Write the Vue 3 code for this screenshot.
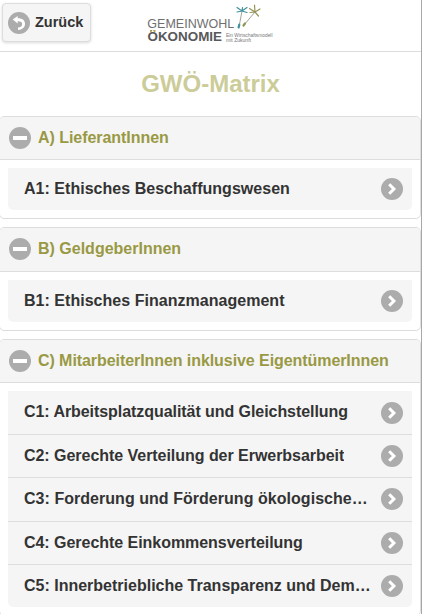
<script setup>
const groups = [
  {
    key: 'a',
    title: 'A) LieferantInnen',
    tracking: -0.05,
    items: [{ text: 'A1: Ethisches Beschaffungswesen', tracking: 0.03 }],
  },
  {
    key: 'b',
    title: 'B) GeldgeberInnen',
    tracking: 0,
    items: [{ text: 'B1: Ethisches Finanzmanagement', tracking: 0.03 }],
  },
  {
    key: 'c',
    title: 'C) MitarbeiterInnen inklusive EigentümerInnen',
    tracking: -0.07,
    items: [
      { text: 'C1: Arbeitsplatzqualität und Gleichstellung', tracking: -0.06 },
      { text: 'C2: Gerechte Verteilung der Erwerbsarbeit', tracking: -0.04 },
      { text: 'C3: Forderung und Förderung ökologischen Verhaltens', tracking: 0.04 },
      { text: 'C4: Gerechte Einkommensverteilung', tracking: -0.04 },
      { text: 'C5: Innerbetriebliche Transparenz und Demokratie', tracking: 0 },
    ],
  },
]
</script>

<template>
  <div class="page">
    <header class="bar">
      <button class="back">
        <svg class="icon" viewBox="0 0 22 22">
          <circle cx="11" cy="11" r="11" fill="#acacac" />
          <path d="M4.700 7.600 9.700 4v2.300c4.600-.1 7.300 2 7.300 5.400 0 3.500-2.700 5.900-7 6.300v-2.400c2.600-.3 4.200-1.700 4.200-3.700 0-1.900-1.500-2.800-4.500-2.700v2.200z" fill="#fff" />
        </svg>
        <span>Zurück</span>
      </button>
      <svg class="logo" viewBox="0 0 128 44">
        <text x="7.300" y="28" font-size="12.800" textLength="87" lengthAdjust="spacingAndGlyphs" fill="#6f6f70">GEMEINWOHL</text>
        <text x="7.500" y="41" font-size="12.800" font-weight="bold" textLength="74.500" lengthAdjust="spacingAndGlyphs" fill="#58585a">ÖKONOMIE</text>
        <g fill="#b5a642"><circle cx="10.800" cy="31" r="1" /><circle cx="14.600" cy="31" r="1" /></g>
        <text x="86" y="36.500" font-size="5.200" textLength="46.500" lengthAdjust="spacingAndGlyphs" fill="#777">Ein Wirtschaftsmodell</text>
        <text x="86" y="42" font-size="5.200" textLength="25" lengthAdjust="spacingAndGlyphs" fill="#777">mit Zukunft</text>
        <g fill="none" stroke-linecap="round">
          <path d="M102 11 99 27M115 12 104 25" stroke="#8b8b7c" stroke-width=".8" />
          <path d="m97 7.500 5 3.500 5-3.500M97 12l5-1 5 1.500M102 11l.5-3.500" stroke="#3f929c" stroke-width="1.200" />
          <path d="m109.500 8.500 5.500 3.500-.5-7M115 12l3.500 4M115 12l-5 .5M115 12l5-3" stroke="#969454" stroke-width="1.200" />
          <path d="m99.300 24.500-.7 3" stroke="#3f929c" stroke-width="2.200" />
          <path d="m105 23.500-1.500 2" stroke="#969454" stroke-width="2.200" />
        </g>
      </svg>
    </header>

    <h1>GWÖ-Matrix</h1>

    <section v-for="g in groups" :key="g.key" class="panel" :class="g.key">
      <h2>
        <svg class="icon" viewBox="0 0 22 22">
          <circle cx="11" cy="11" r="11" fill="#acacac" />
          <path d="M4 9h14v4H4z" fill="#fff" />
        </svg>
        <span :style="{ letterSpacing: g.tracking + 'px' }">{{ g.title }}</span>
      </h2>
      <ul>
        <li v-for="item in g.items" :key="item.text">
          <span class="label" :style="{ letterSpacing: item.tracking + 'px' }">{{ item.text }}</span>
          <svg class="icon" viewBox="0 0 22 22">
            <circle cx="11" cy="11" r="11" fill="#acacac" />
            <path d="m8.200 6.300 4.700 4.700-4.700 4.700" fill="none" stroke="#fff" stroke-width="3" />
          </svg>
        </li>
      </ul>
    </section>
  </div>
</template>

<style>
body { background: #fff; overflow: hidden; }
</style>

<style scoped>
.page {
  box-sizing: border-box;
  width: 422px;
  height: 614px;
  overflow: hidden;
  border-right: 1px solid #a8a8a8;
  font-family: "Liberation Sans", Arial, sans-serif;
  color: #333;
}
.bar {
  box-sizing: border-box;
  height: 52px;
  display: flex;
  align-items: flex-start;
  border-bottom: 1px solid #ddd;
}
.back {
  box-sizing: border-box;
  width: 89px;
  height: 39px;
  margin: 3px 0 0 2px;
  padding: 8px 0 0 5px;
  display: flex;
  align-items: flex-start;
  gap: 5px;
  border: 1px solid #ddd;
  border-radius: 4px;
  background: #f5f5f5;
  box-shadow: 0 1px 3px rgba(0, 0, 0, .15);
  color: #333;
  font: bold 14.5px/20px "Liberation Sans", Arial, sans-serif;
}
.icon { width: 22px; height: 22px; flex: none; display: block; }
.logo {
  width: 128px;
  height: 44px;
  margin-left: 49px;
  overflow: visible;
}
h1 {
  margin: 0;
  height: 64px;
  line-height: 64px;
  text-align: center;
  font-size: 24px;
  color: #cc9;
}
.panel {
  box-sizing: border-box;
  margin: 0 0 8px -1px;
  border: 1px solid #ddd;
  border-radius: 5px;
  background: #fff;
}
h2 {
  box-sizing: border-box;
  height: 43px;
  margin: 0;
  padding: 10px 0 0 9px;
  display: flex;
  align-items: flex-start;
  gap: 7px;
  border-bottom: 1px solid #ddd;
  border-radius: 4px 4px 0 0;
  background: #f5f5f5;
  font-size: 16px;
  line-height: 22px;
  color: #994;
}
.b h2 { height: 44px; }
ul {
  margin: 8px;
  padding: 0;
  list-style: none;
  overflow: hidden;
  border-radius: 0 0 5px 5px;
  background: #f5f5f5;
}
li {
  box-sizing: border-box;
  height: 42px;
  padding: 10px 9px 0 16px;
  display: flex;
  align-items: flex-start;
  justify-content: space-between;
  font-size: 16px;
  font-weight: bold;
}
.c li { height: 43px; }
.c li:nth-child(3) { height: 44px; }
.c li:first-child .icon { margin-top: 1px; }
li + li { border-top: 1px solid #ddd; }
.label {
  min-width: 0;
  max-width: 348px;
  overflow: hidden;
  text-overflow: ellipsis;
  white-space: nowrap;
  line-height: 22px;
}
</style>
